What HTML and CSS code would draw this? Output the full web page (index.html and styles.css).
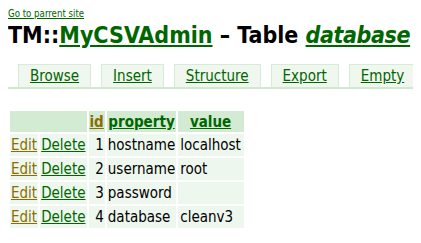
FILE: index.html
```html
<!DOCTYPE html>
<html>
<head>
<meta charset="utf-8">
<link rel="stylesheet" href="styles.css">
</head>
<body>
<a class="parent" href="#">Go to parrent site</a>
<h1 class="title">TM::<a href="#">MyCSVAdmin</a> – Table <a href="#" class="db">database</a></h1>
<ul class="tabs">
  <li><a href="#">Browse</a></li>
  <li><a href="#">Insert</a></li>
  <li><a href="#">Structure</a></li>
  <li><a href="#">Export</a></li>
  <li><a href="#">Empty</a></li>
</ul>
<table class="data">
  <thead>
    <tr><th colspan="2"></th><th><a href="#" class="visited">id</a></th><th><a href="#">property</a></th><th class="val"><a href="#">value</a></th></tr>
  </thead>
  <tbody>
    <tr><td><a href="#" class="visited">Edit</a></td><td><a href="#">Delete</a></td><td class="num">1</td><td>hostname</td><td class="val">localhost</td></tr>
    <tr><td><a href="#" class="visited">Edit</a></td><td><a href="#">Delete</a></td><td class="num">2</td><td>username</td><td class="val">root</td></tr>
    <tr><td><a href="#" class="visited">Edit</a></td><td><a href="#">Delete</a></td><td class="num">3</td><td>password</td><td class="val"></td></tr>
    <tr><td><a href="#" class="visited">Edit</a></td><td><a href="#">Delete</a></td><td class="num">4</td><td>database</td><td class="val">cleanv3</td></tr>
  </tbody>
</table>
</body>
</html>
```
FILE: styles.css
```css
body {
  margin: 8px;
  font-family: "DejaVu Sans Condensed", "DejaVu Sans", sans-serif;
  font-size: 15px;
  color: #000;
  background: #fff;
}
a { color: #006600; }
a.visited { color: #8a6d00; }
.parent {
  display: block;
  font-size: 9.6px;
  line-height: 12px;
}
.title {
  font-size: 23px;
  line-height: 28px;
  margin: 1px 0 0 0;
  font-weight: bold;
  white-space: nowrap;
}
.title .db { font-style: italic; letter-spacing: -0.4px; }
.tabs {
  list-style: none;
  margin: 15px -4px 0 0;
  padding: 0 0 0 10px;
  display: flex;
  gap: 10px;
  border-bottom: 2px solid #cfe8cf;
}
.tabs li {
  background: #eff7ef;
  border: 1px solid #d6ecd6;
  border-bottom: none;
  padding: 2px 11px 1px;
  line-height: 19px;
}
.data {
  margin-top: 20px;
  border-spacing: 2px;
}
.data th {
  background: #d3ead3;
  padding: 2px 1px 1px;
  line-height: 18px;
}
.data td {
  background: #eef7ee;
  padding: 2px 1px;
  line-height: 18px;
}
.data td.num { text-align: right; padding-left: 5px; }
.data .val { padding-left: 2px; padding-right: 3px; }
```
